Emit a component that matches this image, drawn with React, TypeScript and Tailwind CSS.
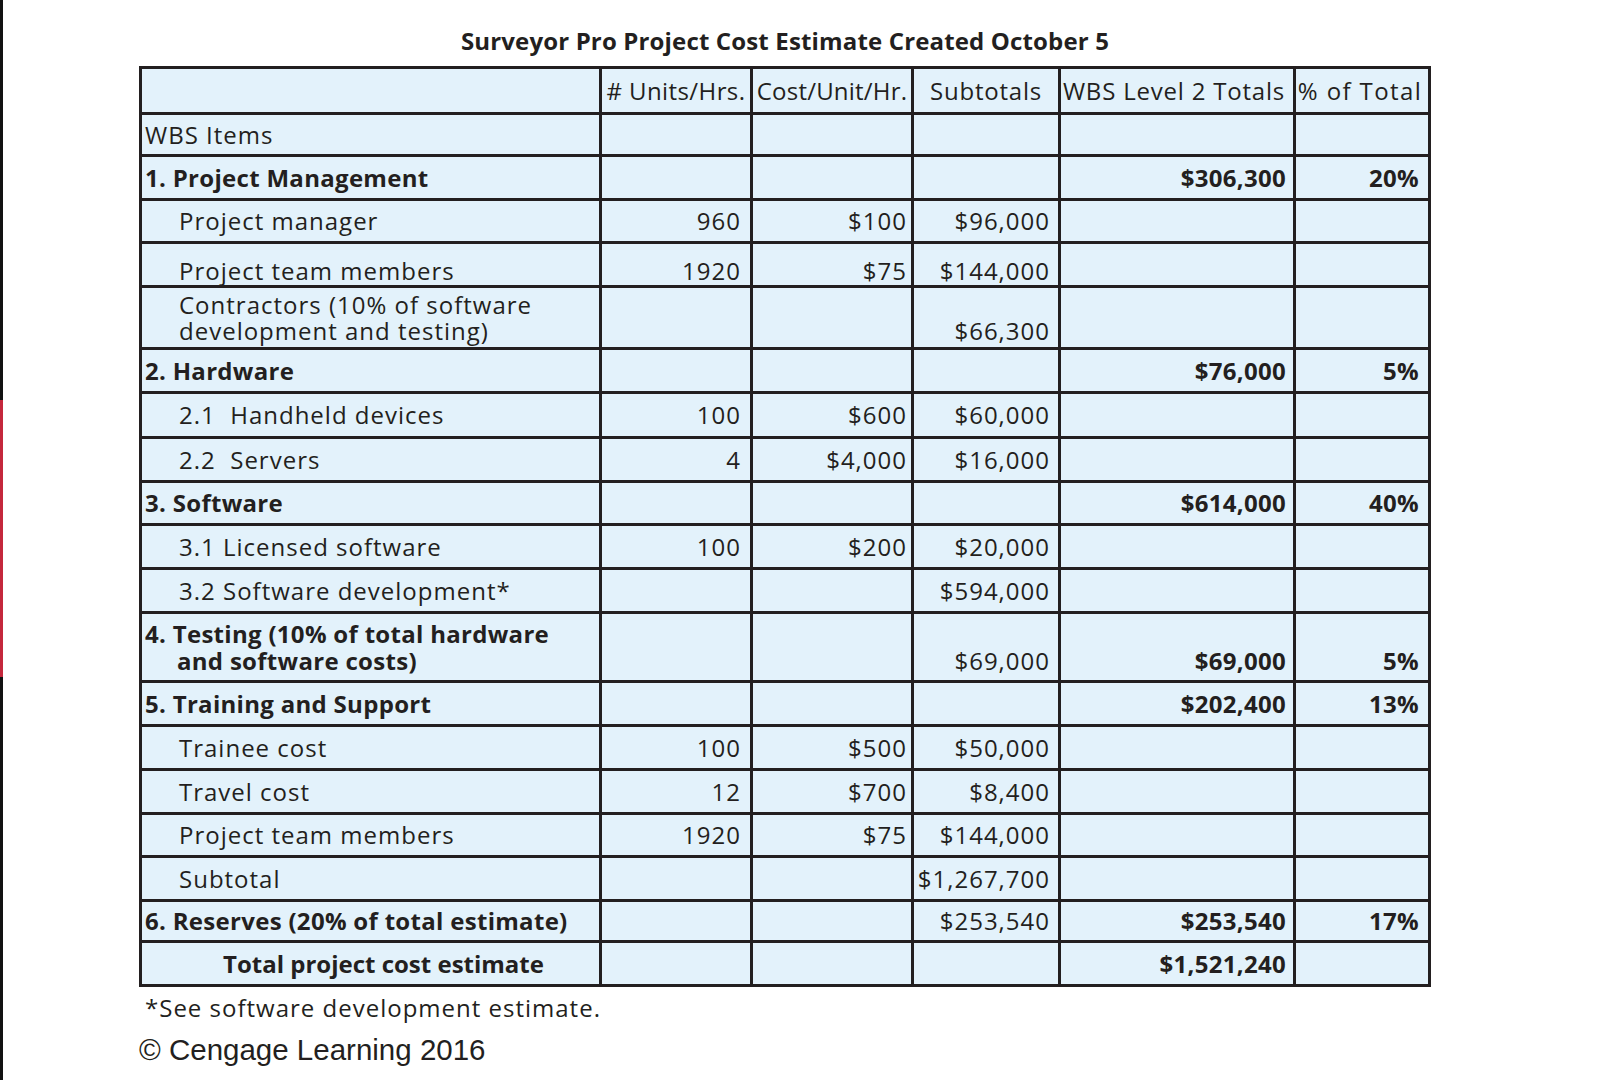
// Surveyor Pro cost estimate table (textbook figure)
import React from "react";

type Kind = "plain" | "section" | "item" | "total";

interface Row {
  label: string[];
  kind: Kind;
  units?: string;
  cost?: string;
  sub?: string;
  l2?: string;
  pct?: string;
  align?: string; // vertical alignment for the whole row
}

const ROWS: Row[] = [
  { label: ["WBS Items"], kind: "plain" },
  { label: ["1. Project Management"], kind: "section", l2: "$306,300", pct: "20%" },
  { label: ["Project manager"], kind: "item", units: "960", cost: "$100", sub: "$96,000" },
  { label: ["Project team members"], kind: "item", units: "1920", cost: "$75", sub: "$144,000", align: "items-end pb-[1px]" },
  { label: ["Contractors (10% of software", "development and testing)"], kind: "item", sub: "$66,300", align: "items-end pb-[3px]" },
  { label: ["2. Hardware"], kind: "section", l2: "$76,000", pct: "5%" },
  { label: ["2.1  Handheld devices"], kind: "item", units: "100", cost: "$600", sub: "$60,000" },
  { label: ["2.2  Servers"], kind: "item", units: "4", cost: "$4,000", sub: "$16,000" },
  { label: ["3. Software"], kind: "section", l2: "$614,000", pct: "40%" },
  { label: ["3.1 Licensed software"], kind: "item", units: "100", cost: "$200", sub: "$20,000" },
  { label: ["3.2 Software development*"], kind: "item", sub: "$594,000" },
  { label: ["4. Testing (10% of total hardware", "and software costs)"], kind: "section", sub: "$69,000", l2: "$69,000", pct: "5%", align: "items-end pb-[6px]" },
  { label: ["5. Training and Support"], kind: "section", l2: "$202,400", pct: "13%" },
  { label: ["Trainee cost"], kind: "item", units: "100", cost: "$500", sub: "$50,000" },
  { label: ["Travel cost"], kind: "item", units: "12", cost: "$700", sub: "$8,400" },
  { label: ["Project team members"], kind: "item", units: "1920", cost: "$75", sub: "$144,000" },
  { label: ["Subtotal"], kind: "item", sub: "$1,267,700" },
  { label: ["6. Reserves (20% of total estimate)"], kind: "section", sub: "$253,540", l2: "$253,540", pct: "17%" },
  { label: ["Total project cost estimate"], kind: "total", l2: "$1,521,240" },
];

const HEADERS = [
  { text: "# Units/Hrs.", cls: "tracking-[0.4px]" },
  { text: "Cost/Unit/Hr.", cls: "tracking-[0.2px]" },
  { text: "Subtotals", cls: "tracking-[0.8px]" },
  { text: "WBS Level 2 Totals", cls: "tracking-[0.8px] pr-[6px]" },
  { text: "% of Total", cls: "tracking-[1.4px] pr-[4px]" },
];

const cellBase = "flex bg-[#e3f2fb] min-w-0";

const LabelCell = ({ row }: { row: Row }) => {
  const bold = row.kind === "section" || row.kind === "total";
  const pad =
    row.kind === "item" ? "pl-[37px]" : row.kind === "total" ? "pl-[81px]" : "pl-[3px]";
  const track = row.kind === "total" ? "tracking-[0px]" : bold ? "tracking-[0.3px]" : "tracking-[1px]";
  const two = row.label.length > 1;
  return (
    <div className={`${cellBase} ${row.align ?? "items-center"} ${pad}`}>
      <div className={`${bold ? "font-bold" : ""} ${track} ${two && bold ? "leading-[27px]" : "leading-[26px]"} whitespace-pre`}>
        {row.label.map((line, i) => (
          <div key={i} className={i > 0 && bold ? "pl-[32px]" : ""}>
            {line}
          </div>
        ))}
      </div>
    </div>
  );
};

const NumCell = ({ value, pad, bold, align }: { value?: string; pad: string; bold?: boolean; align?: string }) => (
  <div className={`${cellBase} justify-end ${align ?? "items-center"} ${pad}`}>
    {value && (
      <span className={`leading-[26px] ${bold ? "font-bold tracking-[0.3px]" : "tracking-[1px]"}`}>{value}</span>
    )}
  </div>
);

export default function App() {
  return (
    <div className="flex min-h-screen bg-white text-[#231f20] font-['Open_Sans',sans-serif] text-[24px]">
      {/* page edge strip */}
      <div className="flex w-[3px] shrink-0 flex-col">
        <div className="h-[400px] bg-[#111111]" />
        <div className="h-[277px] bg-[#c4283c]" />
        <div className="flex-1 bg-[#111111]" />
      </div>

      <div className="pl-[136px] pt-[28px]">
        <h1 className="w-[1292px] text-center font-bold leading-[26px] tracking-[0.15px]">
          Surveyor Pro Project Cost Estimate Created October 5
        </h1>

        <div className="mt-[12px] grid w-[1292px] grid-cols-[457px_148px_158px_144px_232px_132px] grid-rows-[43px_39px_41px_40px_41px_59px_41px_42px_41px_40px_41px_41px_66px_41px_41px_41px_40px_41px_38px_41px] gap-[3px] bg-[#231f20] p-[3px]">
          {/* header */}
          <div className={cellBase} />
          {HEADERS.map((h) => (
            <div key={h.text} className={`${cellBase} items-center justify-center leading-[26px] whitespace-nowrap ${h.cls}`}>
              {h.text}
            </div>
          ))}

          {ROWS.map((row, i) => (
            <React.Fragment key={i}>
              <LabelCell row={row} />
              <NumCell value={row.units} pad="pr-[9px]" align={row.align} />
              <NumCell value={row.cost} pad="pr-[4px]" align={row.align} />
              <NumCell value={row.sub} pad="pr-[8px]" align={row.align} />
              <NumCell value={row.l2} pad="pr-[7px]" bold align={row.align} />
              <NumCell value={row.pct} pad="pr-[9px]" bold align={row.align} />
            </React.Fragment>
          ))}
        </div>

        <p className="mt-[8px] pl-[6px] leading-[26px] tracking-[1px]">*See software development estimate.</p>
        <p className="mt-[12px] font-['Liberation_Sans',Arial,sans-serif] text-[29.5px] leading-[34px]">
          © Cengage Learning 2016
        </p>
      </div>
    </div>
  );
}
